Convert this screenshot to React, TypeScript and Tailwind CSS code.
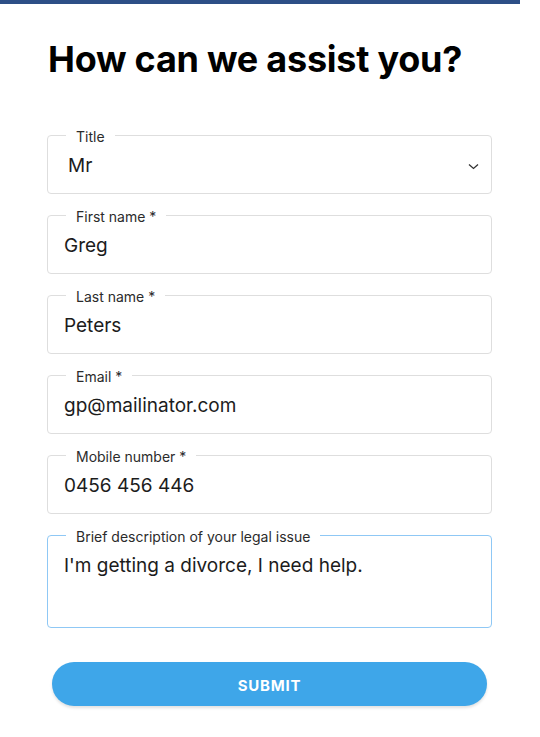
import React from "react";

const font = { fontFamily: "Inter, 'Noto Sans', sans-serif" };

function Field({
  label,
  value,
  tall,
  focused,
  select,
}: {
  label: string;
  value: string;
  tall?: boolean;
  focused?: boolean;
  select?: boolean;
}) {
  const borderClass = focused ? "border-[#8fc8f5]" : "border-[#dedede]";
  const heightClass = tall ? "h-[101px]" : "h-[67px]";
  return (
    <fieldset
      className={`relative rounded-[4px] border px-4 pb-[13px] ${borderClass} ${heightClass}`}
    >
      <legend className="ml-[2px] px-[10px] text-[14px] leading-4 text-[#2b2b2b]">
        <span className="relative top-[2px]">{label}</span>
      </legend>
      <div
        className={`mt-[9px] flex h-7 items-center text-[19px] text-[#1c1c1c] ${
          select ? "pl-1" : ""
        }`}
      >
        {value}
      </div>
      {select && (
        <svg
          className="absolute right-[12px] top-[20px]"
          width="11"
          height="7"
          viewBox="0 0 11 7"
          fill="none"
        >
          <path d="M1 1.5 L5.5 5.5 L10 1.5" stroke="#333" strokeWidth="1.3" />
        </svg>
      )}
    </fieldset>
  );
}

export default function App() {
  return (
    <div className="min-h-[737px] w-[540px] bg-white" style={font}>
      <div className="h-1 w-[520px] bg-[#2d4f86]" />
      <div className="pl-[47px] pr-[48px]">
        <h1 className="ml-px mt-[31px] text-[36px] font-bold leading-[48px] tracking-[-0.25px] text-black">
          How can we assist you?
        </h1>
        <div className="mt-[44px] flex flex-col gap-[13px]">
          <Field label="Title" value="Mr" select />
          <Field label="First name *" value="Greg" />
          <Field label="Last name *" value="Peters" />
          <Field label="Email *" value="gp@mailinator.com" />
          <Field label="Mobile number *" value="0456 456 446" />
          <Field
            label="Brief description of your legal issue"
            value="I'm getting a divorce, I need help."
            tall
            focused
          />
        </div>
        <div className="mt-[34px] px-[5px]">
          <button className="flex h-[44px] w-[435px] items-center justify-center rounded-full bg-[#3ea6e9] pt-[4px] text-[15px] font-bold tracking-[0.8px] text-white shadow-[0_2px_3px_rgba(0,0,0,0.12)]">
            SUBMIT
          </button>
        </div>
      </div>
    </div>
  );
}
